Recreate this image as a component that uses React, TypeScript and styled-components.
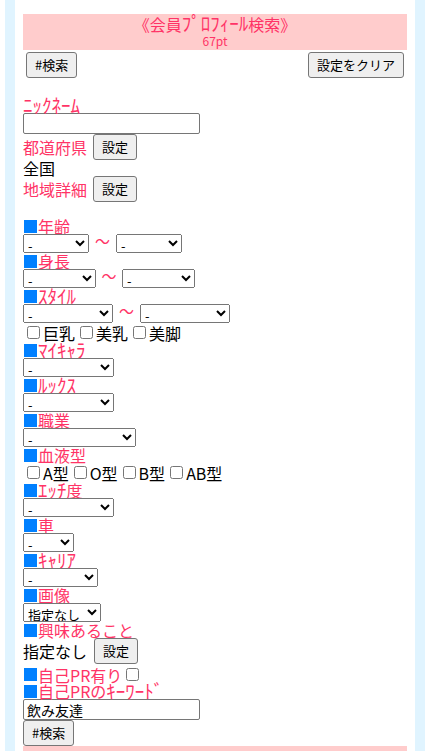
import React from "react";
import styled, { createGlobalStyle } from "styled-components";

const GlobalStyle = createGlobalStyle`
  html, body {
    margin: 0;
    padding: 0;
    background: #ffffff;
  }
  body {
    font-family: "Noto Sans CJK JP", "Noto Sans", sans-serif;
    font-size: 16px;
    color: #000;
  }
`;

const PINK = "#ff3366";

const Frame = styled.div`
  margin-left: 5px;
  width: 420px;
  box-sizing: border-box;
  padding: 0 10px;
  background: #e0f4ff;
  min-height: 751px;
`;

const Panel = styled.div`
  background: #ffffff;
  padding: 14px 8px 0;
  min-height: 751px;
  box-sizing: border-box;
  overflow: hidden;
`;

const Header = styled.div`
  background: #ffcccc;
  height: 36px;
  text-align: center;
  color: ${PINK};
`;

const Title = styled.div`
  font-size: 16px;
  line-height: 20px;
`;

const Sub = styled.div`
  font-size: 12px;
  line-height: 14px;
`;

const TopBar = styled.div`
  display: flex;
  justify-content: space-between;
  padding: 2px 3px;
`;

const Button = styled.button`
  height: 26px;
  padding: 0 8px;
  margin: 0;
  font-family: "Noto Sans CJK JP", sans-serif;
  font-size: 13px;
  line-height: 24px;
  color: #000;
  background: #efefef;
  border: 1px solid #767676;
  border-radius: 3px;
  box-sizing: border-box;
  white-space: nowrap;
`;

const Spacer = styled.div<{ $h: number }>`
  height: ${(p) => p.$h}px;
`;

const FieldLabel = styled.div<{ $h?: number }>`
  display: flex;
  align-items: center;
  height: ${(p) => p.$h ?? 16}px;
  line-height: 16px;
  color: ${PINK};
  font-size: 16px;
  white-space: nowrap;
`;

const Bullet = styled.span`
  flex: none;
  width: 13px;
  height: 13px;
  margin: 0 1px;
  background: #0080ff;
`;

/* half-width katakana: drawn larger so they reach full text height */
const Hankaku = styled.span`
  font-size: 19px;
  line-height: 16px;
`;

const Row = styled.div<{ $h?: number }>`
  display: flex;
  align-items: center;
  height: ${(p) => p.$h ?? 19}px;
  white-space: nowrap;
`;

const InlineLabel = styled.span`
  color: ${PINK};
  font-size: 16px;
  line-height: 16px;
  margin-right: 6px;
`;

const PlainText = styled.span<{ $gap?: number }>`
  font-size: 16px;
  line-height: 16px;
  margin-right: ${(p) => p.$gap ?? 0}px;
`;

const PlainLine = styled.div`
  height: 16px;
  line-height: 16px;
  font-size: 16px;
`;

const Select = styled.select<{ $w: number }>`
  width: ${(p) => p.$w}px;
  height: 19px;
  margin: 0;
  box-sizing: border-box;
  font-family: "Noto Sans CJK JP", sans-serif;
  font-size: 13px;
  color: #000;
`;

const Tilde = styled.span<{ $w: number }>`
  align-self: flex-start;
  width: ${(p) => p.$w}px;
  text-align: center;
  color: ${PINK};
  font-size: 15px;
  line-height: 13px;
`;

const CheckLabel = styled.label`
  display: inline-flex;
  align-items: center;
  font-size: 16px;
  line-height: 16px;
  margin-right: 1px;
`;

const Check = styled.input`
  width: 13px;
  height: 13px;
  margin: 3px 3px 3px 4px;
`;

const TextField = styled.input`
  display: block;
  width: 177px;
  height: 21px;
  margin: 0;
  box-sizing: border-box;
  padding: 1px 3px;
  border: 1px solid #767676;
  border-radius: 2px;
  font-family: "Noto Sans CJK JP", sans-serif;
  font-size: 14px;
  color: #000;
`;

const ButtonRow = styled.div`
  display: flex;
  height: 26px;
`;

const PinkBar = styled.div`
  background: #ffcccc;
  height: 20px;
`;

const Dash = () => <option>-</option>;

const Range = ({ w, gap }: { w: number; gap: number }) => (
  <Row>
    <Select $w={w}>
      <Dash />
    </Select>
    <Tilde $w={gap}>〜</Tilde>
    <Select $w={w}>
      <Dash />
    </Select>
  </Row>
);

const Single = ({ w, text = "-" }: { w: number; text?: string }) => (
  <Row>
    <Select $w={w}>
      <option>{text}</option>
    </Select>
  </Row>
);

const Heading = ({ children, h }: { children: React.ReactNode; h?: number }) => (
  <FieldLabel $h={h}>
    <Bullet />
    {children}
  </FieldLabel>
);

export default function App() {
  return (
    <>
      <GlobalStyle />
      <Frame>
        <Panel>
          <Header>
            <Title>
              《会員<Hankaku>ﾌﾟﾛﾌｨｰﾙ</Hankaku>検索》
            </Title>
            <Sub>67pt</Sub>
          </Header>
          <TopBar>
            <Button>#検索</Button>
            <Button>設定をクリア</Button>
          </TopBar>
          <Spacer $h={17} />
          <FieldLabel>
            <Hankaku>ﾆｯｸﾈｰﾑ</Hankaku>
          </FieldLabel>
          <TextField type="text" />
          <Row $h={26}>
            <InlineLabel>都道府県</InlineLabel>
            <Button>設定</Button>
          </Row>
          <PlainLine>全国</PlainLine>
          <Row $h={26}>
            <InlineLabel>地域詳細</InlineLabel>
            <Button>設定</Button>
          </Row>
          <Spacer $h={16} />

          <Heading>年齢</Heading>
          <Range w={66} gap={27} />
          <Heading>身長</Heading>
          <Range w={73} gap={26} />
          <Heading>
            <Hankaku>ｽﾀｲﾙ</Hankaku>
          </Heading>
          <Range w={90} gap={27} />
          <Row>
            <CheckLabel>
              <Check type="checkbox" />
              巨乳
            </CheckLabel>
            <CheckLabel>
              <Check type="checkbox" />
              美乳
            </CheckLabel>
            <CheckLabel>
              <Check type="checkbox" />
              美脚
            </CheckLabel>
          </Row>
          <Heading>
            <Hankaku>ﾏｲｷｬﾗ</Hankaku>
          </Heading>
          <Single w={91} />
          <Heading>
            <Hankaku>ﾙｯｸｽ</Hankaku>
          </Heading>
          <Single w={91} />
          <Heading>職業</Heading>
          <Single w={113} />
          <Heading>血液型</Heading>
          <Row>
            <CheckLabel>
              <Check type="checkbox" />
              A型
            </CheckLabel>
            <CheckLabel>
              <Check type="checkbox" />
              O型
            </CheckLabel>
            <CheckLabel>
              <Check type="checkbox" />
              B型
            </CheckLabel>
            <CheckLabel>
              <Check type="checkbox" />
              AB型
            </CheckLabel>
          </Row>
          <Heading>
            <Hankaku>ｴｯﾁ</Hankaku>度
          </Heading>
          <Single w={91} />
          <Heading>車</Heading>
          <Single w={51} />
          <Heading>
            <Hankaku>ｷｬﾘｱ</Hankaku>
          </Heading>
          <Single w={75} />
          <Heading>画像</Heading>
          <Single w={78} text="指定なし" />
          <Heading>興味あること</Heading>
          <Row $h={26}>
            <PlainText $gap={7}>指定なし</PlainText>
            <Button>設定</Button>
          </Row>
          <Spacer $h={2} />
          <Heading h={17}>
            自己PR有り
            <Check type="checkbox" />
          </Heading>
          <Heading>
            自己PRの<Hankaku>ｷｰﾜｰﾄﾞ</Hankaku>
          </Heading>
          <TextField type="text" defaultValue="飲み友達" />
          <ButtonRow>
            <Button>#検索</Button>
          </ButtonRow>
          <PinkBar />
        </Panel>
      </Frame>
    </>
  );
}
